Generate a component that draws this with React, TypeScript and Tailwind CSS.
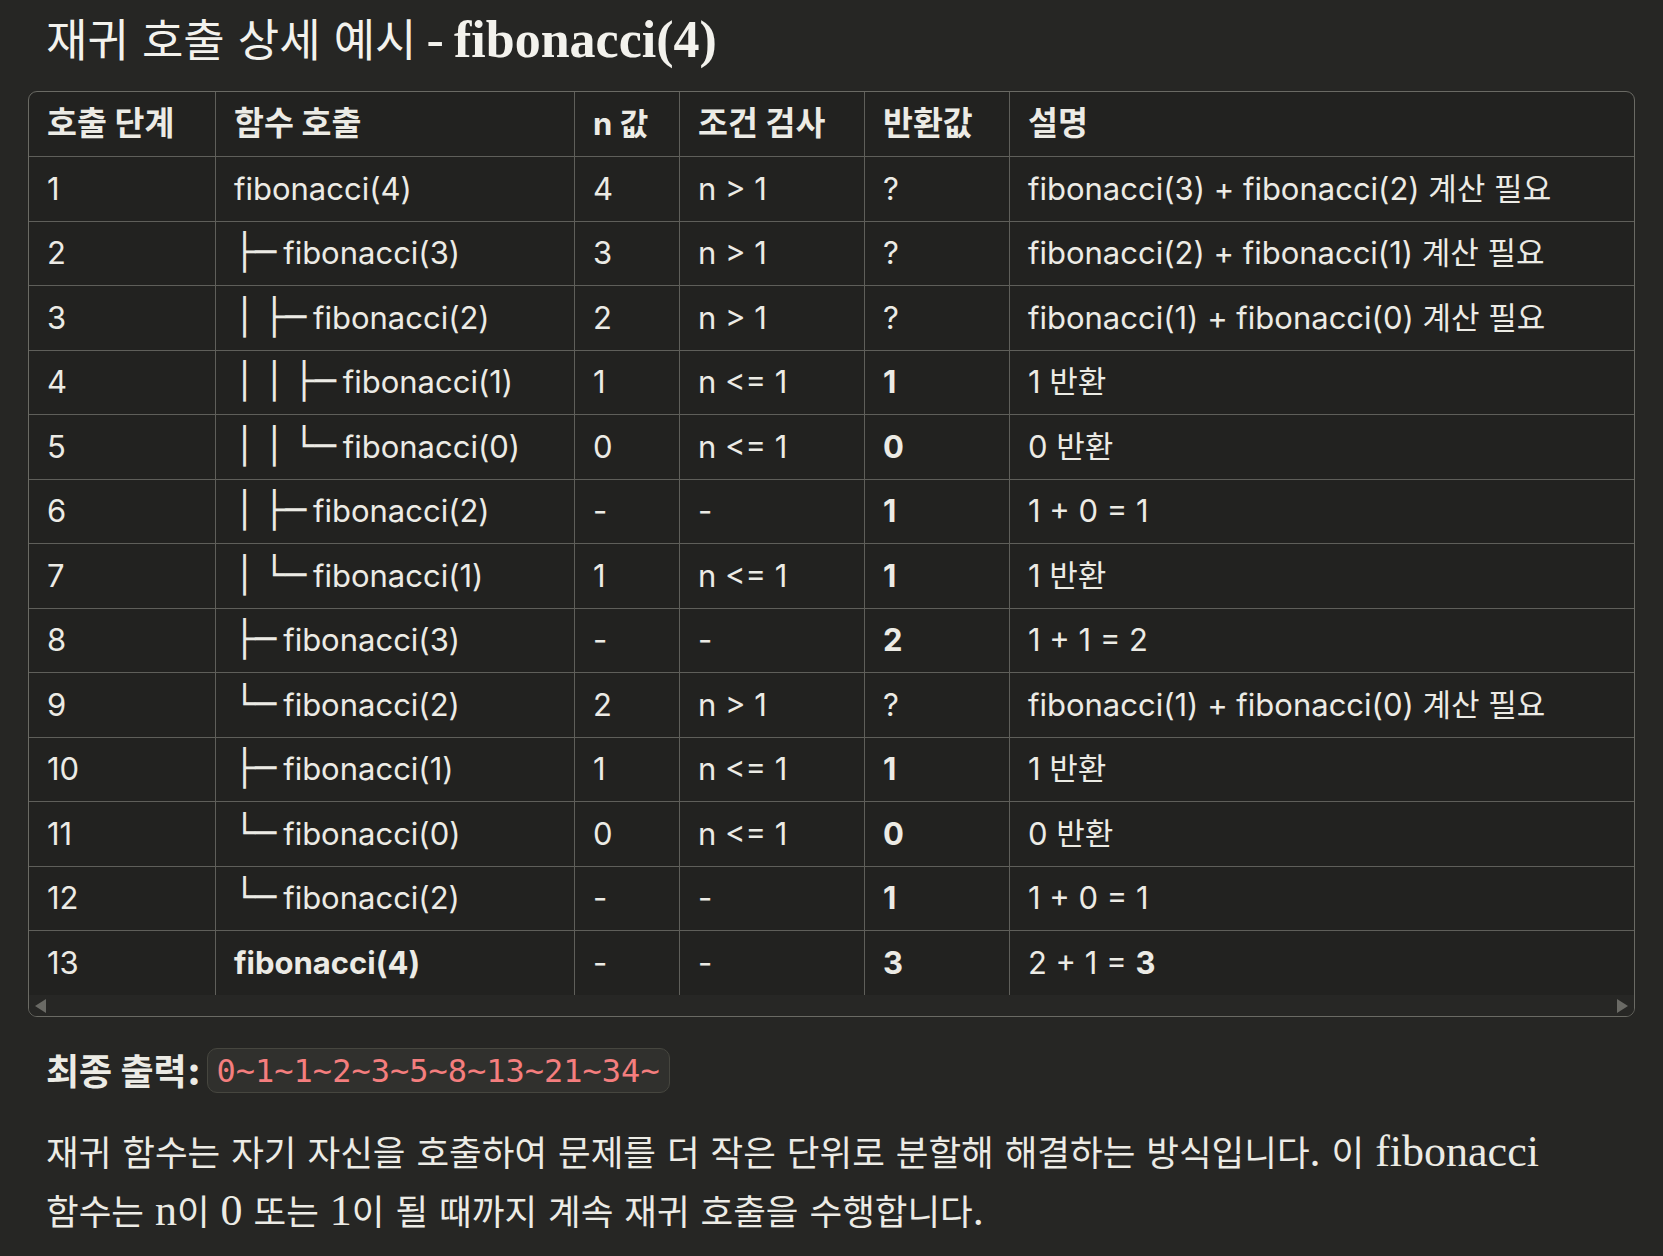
import React from "react";

type Row = {
  step: string;
  tree: string;
  fn: string;
  n: string;
  cond: string;
  ret: string;
  retBold?: boolean;
  desc: React.ReactNode;
  fnBold?: boolean;
};

const rows: Row[] = [
  { step: "1", tree: "", fn: "fibonacci(4)", n: "4", cond: "n > 1", ret: "?", desc: "fibonacci(3) + fibonacci(2) 계산 필요" },
  { step: "2", tree: "├─", fn: "fibonacci(3)", n: "3", cond: "n > 1", ret: "?", desc: "fibonacci(2) + fibonacci(1) 계산 필요" },
  { step: "3", tree: "│ ├─", fn: "fibonacci(2)", n: "2", cond: "n > 1", ret: "?", desc: "fibonacci(1) + fibonacci(0) 계산 필요" },
  { step: "4", tree: "│ │ ├─", fn: "fibonacci(1)", n: "1", cond: "n <= 1", ret: "1", retBold: true, desc: "1 반환" },
  { step: "5", tree: "│ │ └─", fn: "fibonacci(0)", n: "0", cond: "n <= 1", ret: "0", retBold: true, desc: "0 반환" },
  { step: "6", tree: "│ ├─", fn: "fibonacci(2)", n: "-", cond: "-", ret: "1", retBold: true, desc: "1 + 0 = 1" },
  { step: "7", tree: "│ └─", fn: "fibonacci(1)", n: "1", cond: "n <= 1", ret: "1", retBold: true, desc: "1 반환" },
  { step: "8", tree: "├─", fn: "fibonacci(3)", n: "-", cond: "-", ret: "2", retBold: true, desc: "1 + 1 = 2" },
  { step: "9", tree: "└─", fn: "fibonacci(2)", n: "2", cond: "n > 1", ret: "?", desc: "fibonacci(1) + fibonacci(0) 계산 필요" },
  { step: "10", tree: "├─", fn: "fibonacci(1)", n: "1", cond: "n <= 1", ret: "1", retBold: true, desc: "1 반환" },
  { step: "11", tree: "└─", fn: "fibonacci(0)", n: "0", cond: "n <= 1", ret: "0", retBold: true, desc: "0 반환" },
  { step: "12", tree: "└─", fn: "fibonacci(2)", n: "-", cond: "-", ret: "1", retBold: true, desc: "1 + 0 = 1" },
  {
    step: "13",
    tree: "",
    fn: "fibonacci(4)",
    fnBold: true,
    n: "-",
    cond: "-",
    ret: "3",
    retBold: true,
    desc: (
      <>
        2 + 1 = <span className="font-bold">3</span>
      </>
    ),
  },
];

const cols = "grid grid-cols-[187px_359px_105px_185px_145px_1fr]";
const cell = "flex items-center pl-[18px] border-r border-[#5f5f5a] whitespace-nowrap";
const lastCell = "flex items-center pl-[18px] whitespace-nowrap";

function Tree({ prefix }: { prefix: string }) {
  const chars = prefix.split("");
  return (
    <>
      {chars.map((ch, i) =>
        ch === " " ? (
          <React.Fragment key={i}> </React.Fragment>
        ) : (
          <span
            key={i}
            className={`font-['DejaVu_Sans_Mono',monospace] text-[35px] leading-none font-normal ${
              i === chars.length - 1 ? "mr-[7px]" : ""
            }`}
          >
            {ch}
          </span>
        )
      )}
    </>
  );
}

// Latin runs inside Korean prose use the serif face, a bit larger
function Lat({ children, bold, size = "text-[1.24em]" }: { children: React.ReactNode; bold?: boolean; size?: string }) {
  return <span className={`font-['Liberation_Serif',serif] ${size} ${bold ? "font-bold" : ""}`}>{children}</span>;
}

export default function App() {
  return (
    <div className="min-h-[1256px] w-[1663px] bg-[#262624] text-[#ecebe5] px-[28px] font-['Noto_Sans_CJK_KR',sans-serif]">
      <div className="h-[80px] flex items-center pl-[18px] leading-none text-[#f3f2ed] whitespace-nowrap">
        <span className="text-[45px]">
          <span className="[word-spacing:3px]">재귀 호출 상세 예시</span> <Lat size="text-[52px]">-</Lat>{" "}
          <Lat size="text-[52px]" bold>
            fibonacci(4)
          </Lat>
        </span>
      </div>

      <div className="mt-[11px] rounded-[9px] border border-[#6a6a64] bg-[#222220] overflow-hidden font-['Inter','Noto_Sans_CJK_KR',sans-serif] text-[31px] text-[#ecebe5]">
        <div className={`${cols} h-[65px] border-b border-[#5f5f5a] font-bold`}>
          <div className={cell}>
            <span className="text-[32.5px]">호출 단계</span>
          </div>
          <div className={cell}>
            <span className="text-[32.5px]">함수 호출</span>
          </div>
          <div className={cell}>
            <span>n 값</span>
          </div>
          <div className={cell}>
            <span className="text-[32.5px]">조건 검사</span>
          </div>
          <div className={cell}>
            <span className="text-[32.5px]">반환값</span>
          </div>
          <div className={lastCell}>
            <span className="text-[32.5px]">설명</span>
          </div>
        </div>
        {rows.map((r, i) => (
          <div
            key={r.step}
            className={`${cols} ${i < rows.length - 1 ? "h-[64.5px] border-b border-[#5f5f5a]" : "h-[64px]"}`}
          >
            <div className={cell}>
              <span>{r.step}</span>
            </div>
            <div className={`${cell} ${r.fnBold ? "font-bold" : ""}`}>
              <span>
                <Tree prefix={r.tree} />
                {r.fn}
              </span>
            </div>
            <div className={cell}>
              <span>{r.n}</span>
            </div>
            <div className={cell}>
              <span>{r.cond}</span>
            </div>
            <div className={`${cell} ${r.retBold ? "font-bold" : ""}`}>
              <span>{r.ret}</span>
            </div>
            <div className={lastCell}>
              <span>{r.desc}</span>
            </div>
          </div>
        ))}
        <div className="h-[21px] bg-[#272725] flex items-center justify-between px-[6px]">
          <div className="w-0 h-0 border-y-[7px] border-y-transparent border-r-[11px] border-r-[#6a6a65]" />
          <div className="w-0 h-0 border-y-[7px] border-y-transparent border-l-[11px] border-l-[#6a6a65]" />
        </div>
      </div>

      <div className="mt-[31px] pl-[18px] flex items-center gap-[5px] h-[45px]">
        <span className="text-[36px] font-bold leading-none whitespace-nowrap">
          최종 출력<Lat bold>:</Lat>
        </span>
        <span className="h-[45px] px-[9px] flex items-center rounded-[10px] border border-[#46463f] bg-[#30302d] font-['DejaVu_Sans_Mono',monospace] text-[32px] text-[#f47e7e] leading-none">
          0~1~1~2~3~5~8~13~21~34~
        </span>
      </div>

      <p className="mt-[29px] pl-[18px] pr-[39px] text-[35.5px] leading-[58px] [word-spacing:3px] break-keep text-[#ecebe5]">
        재귀 함수는 자기 자신을 호출하여 문제를 더 작은 단위로 분할해 해결하는 방식입니다<Lat>.</Lat> 이 <Lat>fibonacci</Lat>{" "}
        함수는 <Lat>n</Lat>이 <Lat>0</Lat> 또는 <Lat>1</Lat>이 될 때까지 계속 재귀 호출을 수행합니다<Lat>.</Lat>
      </p>
    </div>
  );
}
